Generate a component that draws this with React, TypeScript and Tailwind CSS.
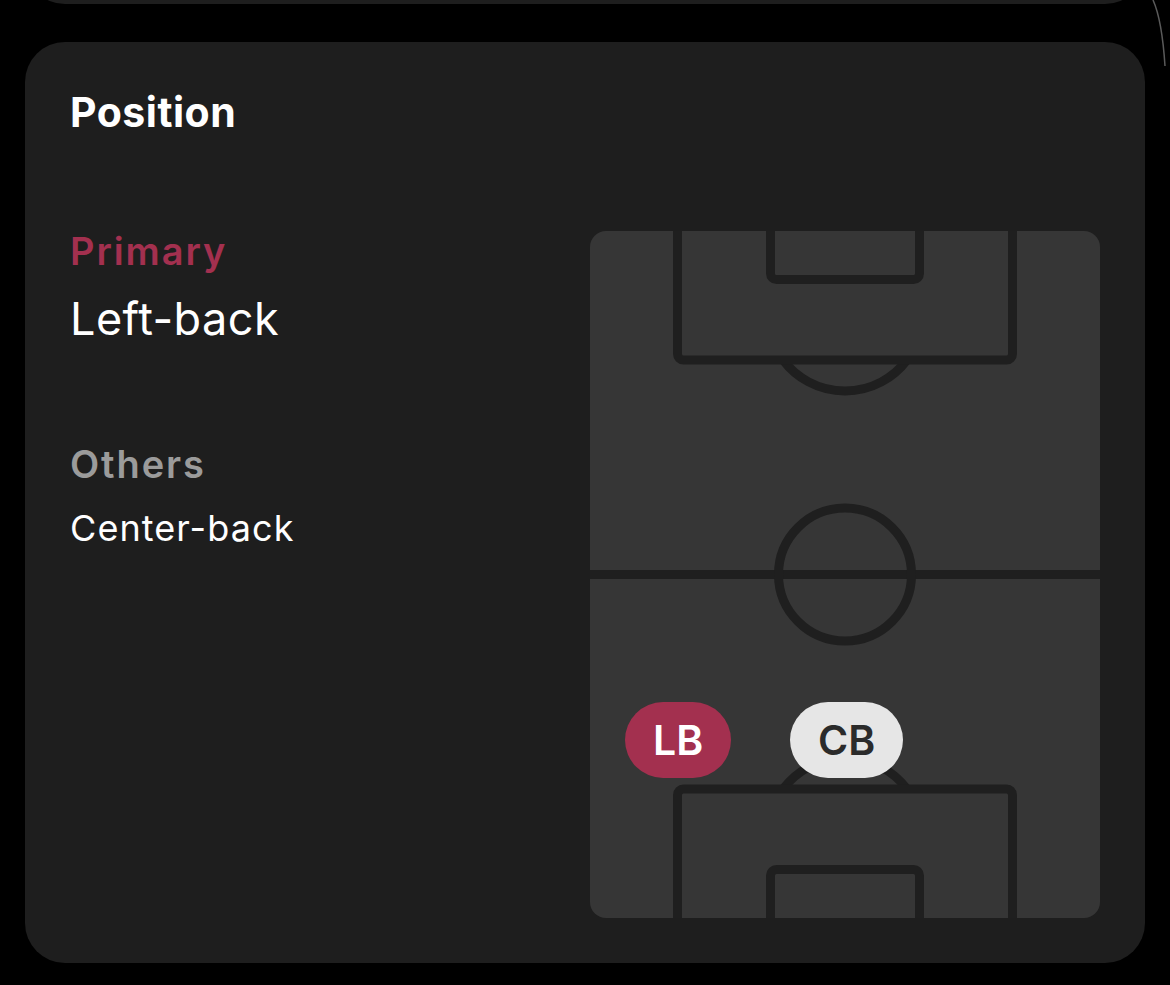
import React from "react";

function Pitch() {
  const line = "#1f1f1f";
  const sw = 9;
  return (
    <svg width="510" height="687" viewBox="0 0 510 687" className="block">
      {/* top half */}
      <path d="M 193 129 A 77.5 77.5 0 0 0 317 129" fill="none" stroke={line} strokeWidth={sw} />
      <rect x="87.5" y="-30" width="335" height="159" rx="6" fill="none" stroke={line} strokeWidth={sw} />
      <rect x="180.5" y="-30" width="149" height="78.5" rx="6" fill="none" stroke={line} strokeWidth={sw} />
      {/* center */}
      <line x1="-10" y1="343.5" x2="520" y2="343.5" stroke={line} strokeWidth={sw} />
      <circle cx="255" cy="343.5" r="66.5" fill="none" stroke={line} strokeWidth={sw} />
      {/* bottom half */}
      <path d="M 193 558 A 77.5 77.5 0 0 1 317 558" fill="none" stroke={line} strokeWidth={sw} />
      <rect x="87.5" y="558" width="335" height="159" rx="6" fill="none" stroke={line} strokeWidth={sw} />
      <rect x="180.5" y="638.5" width="149" height="78.5" rx="6" fill="none" stroke={line} strokeWidth={sw} />
    </svg>
  );
}

export default function App() {
  return (
    <div
      className="relative min-h-[985px] w-[1170px] overflow-hidden bg-black"
      style={{ fontFamily: "Inter, 'Noto Sans', sans-serif" }}
    >
      <svg className="absolute right-0 top-0" width="20" height="70" viewBox="0 0 20 70">
        <path d="M 3 0 Q 12 20 15 66" fill="none" stroke="#5a5a5a" strokeWidth="1.5" />
      </svg>
      <div className="mx-[25px] mt-[-96px] h-[100px] rounded-[40px] bg-[#1e1e1e]" />
      <div className="mx-[25px] mt-[38px] h-[921px] rounded-[40px] bg-[#1e1e1e] px-[45px] pt-[50px]">
        <div className="text-[41px] font-bold leading-none tracking-[0.012em] text-white">Position</div>
        <div className="mt-[98px] flex items-start justify-between">
          <div className="flex flex-col pt-px">
            <div className="text-[38px] font-semibold leading-none tracking-[0.05em] text-[#a3304f]">Primary</div>
            <div className="mt-[26px] text-[45px] font-normal leading-none tracking-[0.01em] text-white">Left-back</div>
            <div className="mt-[104px] text-[38px] font-semibold leading-none tracking-[0.05em] text-[#9b9b9b]">Others</div>
            <div className="mt-[27px] text-[36px] font-normal leading-none tracking-[0.03em] text-white">Center-back</div>
          </div>
          <div className="relative h-[687px] w-[510px] overflow-hidden rounded-[16px] bg-[#363636]">
            <Pitch />
            <div className="absolute left-[35px] top-[471px] flex h-[76px] items-center rounded-full bg-[#a3304f] px-[28px] text-[41px] font-semibold leading-none text-white">
              LB
            </div>
            <div className="absolute left-[200px] top-[471px] flex h-[76px] items-center rounded-full bg-[#e6e6e6] px-[28px] text-[41px] font-semibold leading-none text-[#2b2b2b]">
              CB
            </div>
          </div>
        </div>
      </div>
    </div>
  );
}
